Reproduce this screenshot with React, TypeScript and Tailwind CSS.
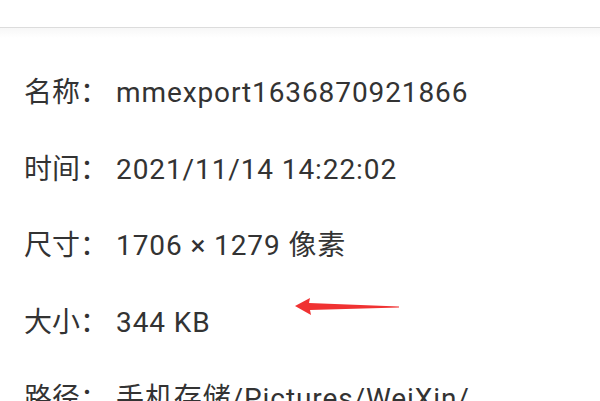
const rows = [
  { label: "名称：", value: "mmexport1636870921866" },
  { label: "时间：", value: "2021/11/14 14:22:02" },
  { label: "尺寸：", value: "1706 × 1279 像素" },
  { label: "大小：", value: "344 KB" },
  { label: "路径：", value: "手机存储/Pictures/WeiXin/" },
];

export default function App() {
  return (
    <div
      className="relative w-[600px] h-[401px] overflow-hidden bg-white text-[#333333]"
      style={{ fontFamily: 'Roboto, "Noto Sans CJK SC", sans-serif' }}
    >
      <div className="h-[27px] bg-white" />
      <div className="h-px bg-[#dcdcdc]" />
      <div className="h-[10px] bg-gradient-to-b from-[#f7f7f7] to-white" />
      <div className="flex flex-col pl-6 pt-[17px]">
        {rows.map((r) => (
          <div key={r.label} className="flex items-center h-[76.5px] text-[28px] leading-none">
            <span className="w-[92px] shrink-0">{r.label}</span>
            <span className="whitespace-nowrap tracking-[0.9px]">{r.value}</span>
          </div>
        ))}
      </div>
      <svg className="absolute left-[290px] top-[294px]" width="115" height="24" viewBox="0 0 115 24">
        <polygon points="5,12 20,4 19,9 109,12.5 109,13.5 20,16 21,21" fill="#f03232" />
      </svg>
    </div>
  );
}
